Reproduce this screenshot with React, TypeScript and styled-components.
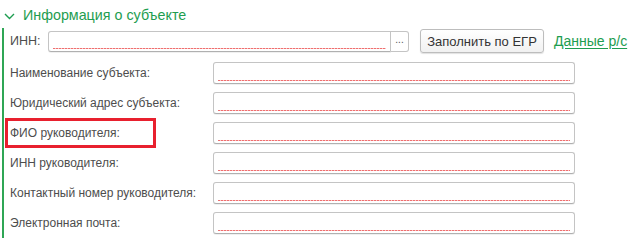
import React from 'react';
import styled, { createGlobalStyle } from 'styled-components';

const GlobalStyle = createGlobalStyle`
  html, body {
    margin: 0;
    padding: 0;
    background: #fff;
  }
  body {
    font-family: 'Liberation Sans', Arial, sans-serif;
    color: #4d4d4d;
  }
`;

const Page = styled.div`
  width: 640px;
  height: 240px;
  overflow: hidden;
`;

const Header = styled.div`
  display: flex;
  align-items: center;
  height: 28px;
  padding-left: 4px;
  gap: 8px;
`;

const Title = styled.span`
  font-size: 14.3px;
  color: #1e9d50;
  margin-top: 2px;
`;

const Section = styled.div`
  margin-left: 2px;
  border-left: 2px solid #2fa655;
  padding-left: 1px;
  padding-top: 1px;
`;

const InnRow = styled.div`
  display: flex;
  align-items: center;
  height: 24px;
  margin-bottom: 5px;
`;

const InnLabel = styled.span`
  font-size: 12.5px;
  padding-left: 5px;
  width: 38px;
`;

const FieldGroup = styled.div<{ $height?: number }>`
  display: flex;
  height: ${p => p.$height || 21}px;
`;

const Field = styled.div<{ $width: number; $radius?: string }>`
  position: relative;
  box-sizing: border-box;
  width: ${p => p.$width}px;
  height: 100%;
  background: #fff;
  border: 1px solid #c4c4c4;
  border-bottom-color: #b0b0b0;
  border-radius: ${p => p.$radius || '3px'};
  box-shadow: 0 1px 0 rgba(0, 0, 0, 0.06);
  &::after {
    content: '';
    position: absolute;
    left: 4px;
    right: 4px;
    bottom: 2px;
    height: 1px;
    background: repeating-linear-gradient(90deg, #ef6f6f 0 2px, #f9c4c4 2px 3px);
  }
`;

const Ellipsis = styled.div`
  box-sizing: border-box;
  width: 18px;
  height: 100%;
  border: 1px solid #c4c4c4;
  border-left: none;
  border-radius: 0 3px 3px 0;
  background: #fff;
  display: flex;
  align-items: center;
  justify-content: center;
  font-size: 10px;
  color: #555;
  padding-bottom: 4px;
`;

const Button = styled.div`
  box-sizing: border-box;
  margin-left: 11px;
  width: 124px;
  height: 24px;
  border: 1px solid #bdbdbd;
  border-radius: 3px;
  background: linear-gradient(#ffffff, #f1f1f1);
  box-shadow: 0 1px 1px rgba(0, 0, 0, 0.12);
  display: flex;
  align-items: center;
  justify-content: center;
  font-size: 13px;
  color: #333;
`;

const Link = styled.span`
  margin-left: 10px;
  font-size: 14px;
  color: #1e9d50;
  text-decoration: underline;
  text-underline-offset: 2px;
`;

const Row = styled.div`
  display: flex;
  align-items: center;
  height: 30px;
`;

const Label = styled.div`
  box-sizing: border-box;
  width: 208px;
  height: 30px;
  display: flex;
  align-items: center;
  font-size: 12px;
  padding-left: 5px;
`;

const MarkedBox = styled.div`
  box-sizing: border-box;
  width: 151px;
  height: 30px;
  margin-left: -5px;
  border: 3px solid #e8202e;
  display: flex;
  align-items: center;
  padding-left: 2px;
`;

const Chevron = () => (
  <svg width="11" height="7" viewBox="0 0 11 7" style={{ marginTop: 4 }}>
    <path d="M1 1 L5.5 5.5 L10 1" fill="none" stroke="#1e9d50" strokeWidth="1.4" />
  </svg>
);

const rows = [
  'Наименование субъекта:',
  'Юридический адрес субъекта:',
  'ФИО руководителя:',
  'ИНН руководителя:',
  'Контактный номер руководителя:',
  'Электронная почта:',
];

export default function App() {
  return (
    <Page>
      <GlobalStyle />
      <Header>
        <Chevron />
        <Title>Информация о субъекте</Title>
      </Header>
      <Section>
        <InnRow>
          <InnLabel>ИНН:</InnLabel>
          <FieldGroup>
            <Field $width={343} $radius="3px 0 0 3px" />
            <Ellipsis>...</Ellipsis>
          </FieldGroup>
          <Button>Заполнить по ЕГР</Button>
          <Link>Данные р/с</Link>
        </InnRow>
        {rows.map((text, i) => (
          <Row key={text}>
            <Label>
              {i === 2 ? <MarkedBox>{text}</MarkedBox> : text}
            </Label>
            <FieldGroup $height={22}>
              <Field $width={362} />
            </FieldGroup>
          </Row>
        ))}
      </Section>
    </Page>
  );
}
